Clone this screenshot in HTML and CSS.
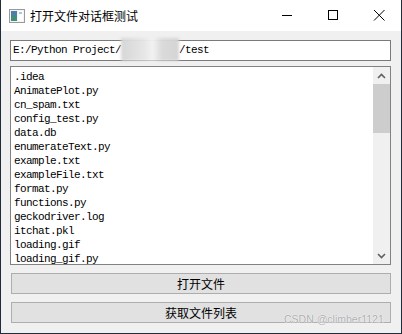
FILE: index.html
```html
<!DOCTYPE html>
<html>

<head>
    <link rel="stylesheet" href="styles.css">
</head>

<body>
    <div class="window">
        <div class="titlebar">
            <svg class="app-icon" width="16" height="14" viewBox="0 0 16 14">
                <rect x="0.5" y="0.5" width="15" height="13" fill="#f4f4f4" stroke="#9a9a9a" />
                <rect x="2" y="2" width="6" height="10" fill="#3f8f7a" />
                <rect x="2" y="2" width="6" height="4" fill="#4a7fb0" />
                <rect x="9" y="2" width="5" height="10" fill="#ffffff" />
                <rect x="10" y="3" width="3" height="2" fill="#a8c8e0" />
            </svg>
            <span class="title">打开文件对话框测试</span>
            <div class="controls">
                <svg width="46" height="31" viewBox="0 0 46 31">
                    <line x1="18" y1="15.5" x2="28" y2="15.5" stroke="#000" />
                </svg>
                <svg width="46" height="31" viewBox="0 0 46 31">
                    <rect x="18.5" y="10.5" width="9" height="9" fill="none" stroke="#000" />
                </svg>
                <svg width="46" height="31" viewBox="0 0 46 31">
                    <path d="M18 10 L28.5 20.5 M28.5 10 L18 20.5" stroke="#000" />
                </svg>
            </div>
        </div>

        <div class="client">
            <div class="path-edit">E:/Python Project/<span class="blurred"></span>/test</div>

            <div class="listbox">
                <ul class="files">
                    <li>.idea</li>
                    <li>AnimatePlot.py</li>
                    <li>cn_spam.txt</li>
                    <li>config_test.py</li>
                    <li>data.db</li>
                    <li>enumerateText.py</li>
                    <li>example.txt</li>
                    <li>exampleFile.txt</li>
                    <li>format.py</li>
                    <li>functions.py</li>
                    <li>geckodriver.log</li>
                    <li>itchat.pkl</li>
                    <li>loading.gif</li>
                    <li>loading_gif.py</li>
                </ul>
                <div class="scrollbar">
                    <div class="arrow">
                        <svg width="9" height="6" viewBox="0 0 9 6">
                            <polyline points="1,5 4.5,1.5 8,5" fill="none" stroke="#606060" stroke-width="1.6" />
                        </svg>
                    </div>
                    <div class="track">
                        <div class="thumb"></div>
                    </div>
                    <div class="arrow">
                        <svg width="9" height="6" viewBox="0 0 9 6">
                            <polyline points="1,1 4.5,4.5 8,1" fill="none" stroke="#606060" stroke-width="1.6" />
                        </svg>
                    </div>
                </div>
            </div>

            <button class="btn">打开文件</button>
            <button class="btn">获取文件列表</button>
        </div>

        <span class="watermark">CSDN @climber1121</span>
    </div>
</body>

</html>
```

FILE: styles.css
```css
body {
    margin: 0;
    padding: 0;
    background-color: #f0f0f0;
    font-family: "Noto Sans CJK SC", "Liberation Sans", sans-serif;
}

div.window {
    position: relative;
    width: 400px;
    height: 333px;
    border: 1px solid #1f2d3d;
    border-top: none;
    background-color: #f0f0f0;
    overflow: hidden;
}

.titlebar {
    height: 31px;
    background-color: #fff;
    display: flex;
    align-items: center;
}

.app-icon {
    margin-left: 8px;
    margin-top: 1px;
}

.title {
    margin-left: 5px;
    font-size: 12px;
    color: #000;
    flex: 1;
    line-height: 31px;
}

.controls {
    display: flex;
    margin-right: -1px;
}

.controls svg {
    display: block;
}

.client {
    padding: 9px 10px 0 9px;
    display: flex;
    flex-direction: column;
}

.path-edit {
    height: 19px;
    border: 1px solid #7a7a7a;
    background-color: #fff;
    padding-left: 2px;
    font-family: "Liberation Mono", monospace;
    font-size: 11px;
    letter-spacing: -0.6px;
    line-height: 19px;
    white-space: nowrap;
}

.blurred {
    display: inline-block;
    width: 58px;
    height: 23px;
    margin: -3px 0 -2px;
    vertical-align: middle;
    background: linear-gradient(90deg, #d6d6d6, #e6e6e6 40%, #f2f2f2 55%, #dadada 70%, #d4d4d4);
    filter: blur(1.5px);
}

.listbox {
    margin-top: 5px;
    height: 197px;
    border: 1px solid #828282;
    background-color: #fff;
    display: flex;
    overflow: hidden;
}

ul.files {
    flex: 1;
    list-style: none;
    margin: 0;
    padding: 3px 0 0 3px;
    font-family: "Liberation Mono", monospace;
    font-size: 11px;
    letter-spacing: -0.6px;
    line-height: 14px;
    color: #000;
}

.scrollbar {
    width: 17px;
    background-color: #f0f0f0;
    display: flex;
    flex-direction: column;
}

.arrow {
    height: 17px;
    display: flex;
    align-items: center;
    justify-content: center;
}

.track {
    flex: 1;
}

.thumb {
    height: 49px;
    background-color: #cdcdcd;
}

.btn {
    margin: 8px 0 0 1px;
    height: 21px;
    border: 1px solid #adadad;
    background-color: #e1e1e1;
    font-family: "Noto Sans CJK SC", sans-serif;
    font-size: 12px;
    color: #000;
    padding: 0;
    line-height: 19px;
}

.watermark {
    position: absolute;
    left: 283px;
    top: 313px;
    font-family: "Liberation Sans", sans-serif;
    font-size: 10.5px;
    color: #acacac;
    text-shadow: 0 0 1px #fff, 0 0 1px #fff;
}
```
